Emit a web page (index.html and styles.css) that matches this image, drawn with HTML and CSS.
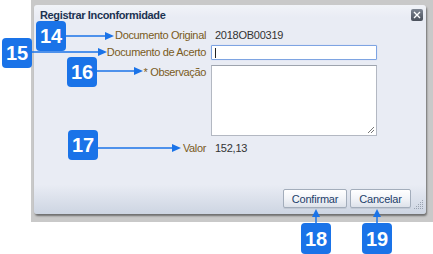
FILE: index.html
```html
<!DOCTYPE html>
<html lang="pt">
<head>
<meta charset="utf-8">
<title>Registrar Inconformidade</title>
<link rel="stylesheet" href="styles.css">
</head>
<body>
<div class="page">
  <div class="frame">
    <div class="dialog">
      <div class="header">
        <span class="title">Registrar Inconformidade</span>
        <span class="close" aria-label="Fechar">
          <svg width="12" height="12" viewBox="0 0 12 12"><path d="M3 3 L9 9 M9 3 L3 9" stroke="#fff" stroke-width="1.4"/></svg>
        </span>
      </div>
      <div class="form">
        <div class="row r1">
          <span class="label">Documento Original</span>
          <span class="value">2018OB00319</span>
        </div>
        <div class="row r2">
          <span class="label">Documento de Acerto</span>
          <span class="input"><span class="caret"></span></span>
        </div>
        <div class="row r3">
          <span class="label">* Observação</span>
          <span class="textarea">
            <svg class="grip-small" width="8" height="8" viewBox="0 0 8 8"><path d="M7 1 L1 7 M7 4 L4 7" stroke="#777" stroke-width="1"/></svg>
          </span>
        </div>
        <div class="row r4">
          <span class="label">Valor</span>
          <span class="value">152,13</span>
        </div>
      </div>
      <div class="footer">
        <button class="btn b1">Confirmar</button>
        <button class="btn b2">Cancelar</button>
      </div>
      <svg class="grip" width="10" height="10" viewBox="0 0 10 10">
        <g fill="#9aa3b0">
          <rect x="8" y="0" width="1" height="1"/>
          <rect x="6" y="2" width="1" height="1"/><rect x="8" y="2" width="1" height="1"/>
          <rect x="4" y="4" width="1" height="1"/><rect x="6" y="4" width="1" height="1"/><rect x="8" y="4" width="1" height="1"/>
          <rect x="2" y="6" width="1" height="1"/><rect x="4" y="6" width="1" height="1"/><rect x="6" y="6" width="1" height="1"/><rect x="8" y="6" width="1" height="1"/>
          <rect x="0" y="8" width="1" height="1"/><rect x="2" y="8" width="1" height="1"/><rect x="4" y="8" width="1" height="1"/><rect x="6" y="8" width="1" height="1"/><rect x="8" y="8" width="1" height="1"/>
        </g>
      </svg>
    </div>
  </div>

  <svg class="arrows" width="433" height="254" viewBox="0 0 433 254">
    <g stroke="#1a73e8" stroke-width="1.5" fill="none">
      <line x1="66" y1="36" x2="107" y2="36"/>
      <line x1="32" y1="52" x2="100" y2="52"/>
      <line x1="97" y1="71" x2="137" y2="71"/>
      <line x1="98" y1="148" x2="174" y2="148"/>
      <line x1="316" y1="224" x2="316" y2="216"/>
      <line x1="377" y1="224" x2="377" y2="216"/>
    </g>
    <g fill="#1a73e8">
      <path d="M114 36 L105 32 L105 40 Z"/>
      <path d="M107 52 L98 48 L98 56 Z"/>
      <path d="M143 71 L134 67 L134 75 Z"/>
      <path d="M181 148 L172 144 L172 152 Z"/>
      <path d="M316 209 L312 217 L320 217 Z"/>
      <path d="M377 209 L373 217 L381 217 Z"/>
    </g>
  </svg>
  <span class="badge n14">14</span>
  <span class="badge n15">15</span>
  <span class="badge n16">16</span>
  <span class="badge n17">17</span>
  <span class="badge n18">18</span>
  <span class="badge n19">19</span>
</div>
</body>
</html>
```
FILE: styles.css
```css
html, body {
  margin: 0;
  padding: 0;
  background: #ffffff;
}
body {
  font-family: "Liberation Sans", Arial, sans-serif;
  font-size: 11px;
}
.page {
  position: relative;
  width: 433px;
  height: 254px;
  overflow: hidden;
}
.frame {
  margin-left: 31px;
  width: 402px;
  height: 222px;
  box-sizing: border-box;
  padding: 5px 0 0 3px;
  background: #c9c9c9;
}
.dialog {
  position: relative;
  width: 392px;
  height: 209px;
  box-sizing: border-box;
  border-radius: 3px;
  background: linear-gradient(to bottom, #f1f3f8 0, #e9ecf4 6%, #e9ecf4 86%, #cdd5e2 100%);
  box-shadow: 1px 2px 2px rgba(0, 0, 0, 0.45);
  padding: 4px 3px 6px 6px;
  display: flex;
  flex-direction: column;
}
.header {
  display: flex;
  justify-content: space-between;
  align-items: flex-start;
  height: 13px;
}
.title {
  font-weight: bold;
  color: #1c3352;
  line-height: 13px;
  letter-spacing: -0.35px;
}
.close {
  display: flex;
  width: 12px;
  height: 12px;
  border-radius: 2px;
  background: linear-gradient(to bottom, #7d8592, #4a505b);
}
.form {
  display: flex;
  flex-direction: column;
  margin-top: 7px;
}
.row {
  display: grid;
  grid-template-columns: 166px 166px;
  column-gap: 5px;
  align-items: center;
}
.label {
  text-align: right;
  color: #7a5b1c;
  line-height: 13px;
  letter-spacing: -0.35px;
}
.value {
  color: #333333;
  padding-left: 4px;
  line-height: 13px;
  letter-spacing: -0.25px;
}
.r1 { height: 13px; }
.r2 { margin-top: 3px; height: 15px; }
.r3 { margin-top: 5px; height: 71px; align-items: start; }
.r3 .label { margin-top: 1px; }
.r4 { margin-top: 6px; height: 13px; }
.input {
  display: flex;
  align-items: center;
  height: 15px;
  box-sizing: border-box;
  border: 1px solid #7ea4e2;
  border-radius: 1px;
  background: #ffffff;
  box-shadow: 0 0 1px #a9c3ef;
  padding-left: 3px;
}
.caret {
  width: 1px;
  height: 10px;
  background: #222;
}
.textarea {
  position: relative;
  height: 71px;
  box-sizing: border-box;
  border: 1px solid #b3b8c2;
  border-top-color: #9ea4ae;
  background: #ffffff;
}
.grip-small {
  position: absolute;
  right: 1px;
  bottom: 1px;
}
.footer {
  margin-top: auto;
  display: flex;
  justify-content: flex-end;
  gap: 3px;
  padding-right: 12px;
}
.btn {
  font-family: "Liberation Sans", Arial, sans-serif;
  font-size: 11px;
  letter-spacing: -0.2px;
  color: #23406a;
  height: 19px;
  padding: 0;
  border: 1px solid #a3adbb;
  border-radius: 2px;
  background: linear-gradient(to bottom, #ffffff 0, #f2f4f8 50%, #dde2ea 100%);
  box-shadow: 0 1px 0 #c2c9d4;
}
.b1 { width: 64px; }
.b2 { width: 61px; }
.grip {
  position: absolute;
  right: 2px;
  bottom: 4px;
}
.arrows {
  position: absolute;
  left: 0;
  top: 0;
}
.badge {
  position: absolute;
  width: 30px;
  height: 30px;
  border-radius: 4px;
  background: #1a73e8;
  color: #ffffff;
  font-family: "Liberation Sans", Arial, sans-serif;
  font-weight: bold;
  font-size: 20px;
  line-height: 30px;
  text-align: center;
}
.n14 { left: 36px; top: 21px; }
.n15 { left: 2px; top: 38px; }
.n16 { left: 67px; top: 57px; }
.n17 { left: 68px; top: 130px; }
.n18 { left: 301px; top: 223px; height: 31px; line-height: 32px; }
.n19 { left: 362px; top: 223px; height: 31px; line-height: 32px; }
```
